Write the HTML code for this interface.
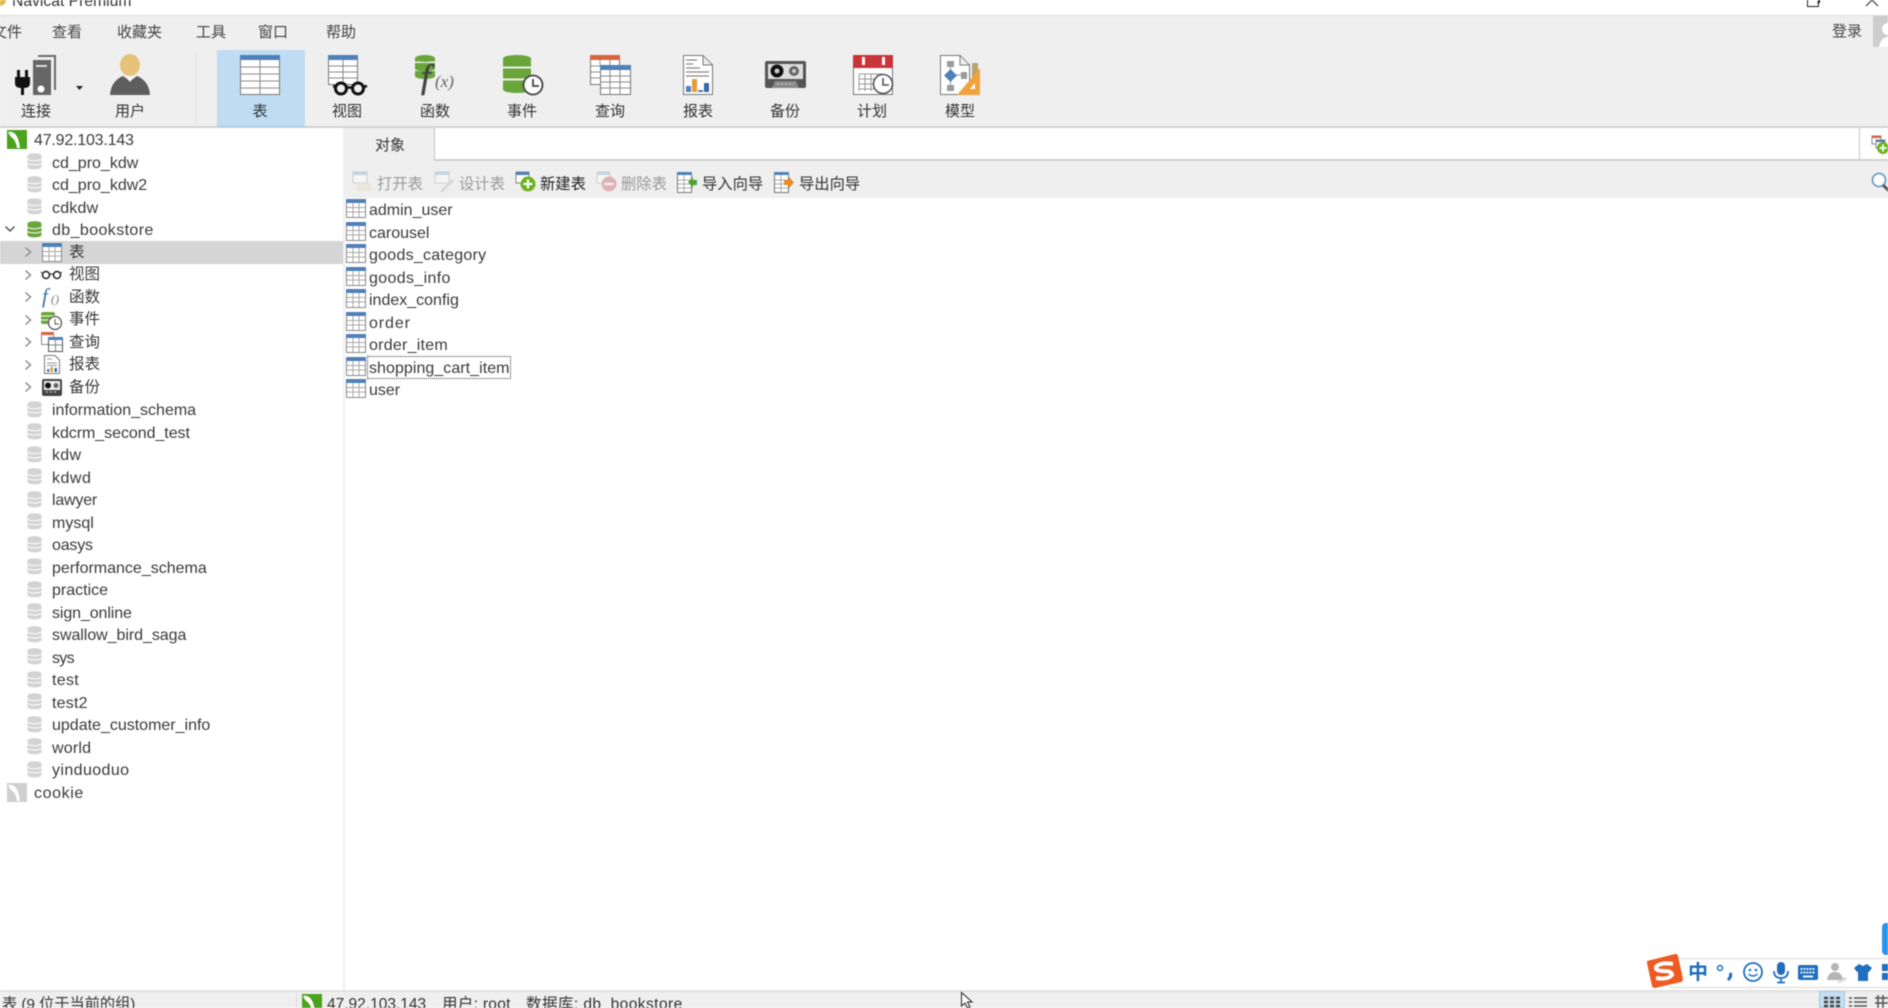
<!DOCTYPE html>
<html lang="zh"><head><meta charset="utf-8"><title>Navicat Premium</title>
<style>
html,body{margin:0;padding:0;width:1888px;height:1008px;overflow:hidden;background:#fff}
#r{position:relative;width:1888px;height:1008px;overflow:hidden;background:#fff;font-family:"Liberation Sans","Noto Sans CJK SC",sans-serif;color:#333;filter:blur(.4px)}
#r>*{position:absolute}
.t{white-space:nowrap;font-size:15.5px;line-height:22px;height:22px}
.m{top:22px;color:#444;font-size:15px}
.l{top:101px;width:70px;text-align:center;font-size:15px;color:#333}
.o{top:174px;font-size:15.3px;color:#333}
.g{color:#9a9a9a}
.s{position:absolute}
.row{font-size:16px;color:#3a3a3a}
.c{font-size:15.5px}
svg{overflow:visible}
</style></head><body>
<svg width="0" height="0" style="position:absolute">
<defs>
<symbol id="db" viewBox="0 0 15 17"><g fill="#d3d3d3"><ellipse cx="7.5" cy="2.6" rx="7" ry="2.4"/><rect x=".5" y="2.6" width="14" height="3.2"/><ellipse cx="7.5" cy="5.8" rx="7" ry="2.2"/><rect x=".5" y="7" width="14" height="3"/><ellipse cx="7.5" cy="10" rx="7" ry="2.2"/><rect x=".5" y="11" width="14" height="3"/><ellipse cx="7.5" cy="14" rx="7" ry="2.4"/></g><path d="M1 6.6Q7.5 9 14 6.600M1 10.900Q7.5 13.200 14 10.900" stroke="#fff" fill="none"/></symbol>
<symbol id="dbg" viewBox="0 0 15 17"><g fill="#6aa53a"><ellipse cx="7.5" cy="2.6" rx="7" ry="2.4"/><rect x=".5" y="2.6" width="14" height="3.2"/><ellipse cx="7.5" cy="5.8" rx="7" ry="2.2"/><rect x=".5" y="7" width="14" height="3"/><ellipse cx="7.5" cy="10" rx="7" ry="2.2"/><rect x=".5" y="11" width="14" height="3"/><ellipse cx="7.5" cy="14" rx="7" ry="2.4"/></g><path d="M1 6.6Q7.5 9 14 6.600M1 10.900Q7.5 13.200 14 10.900" stroke="#fff" fill="none"/></symbol>
<symbol id="tb" viewBox="0 0 20 19"><rect x=".5" y=".5" width="19" height="18" fill="#fff" stroke="#8a8a8a"/><rect width="20" height="4" fill="#4f81b8"/><path d="M1 8.500H19M1 13H19M7 4V18M13 4V18" stroke="#a9a9a9"/></symbol>
<symbol id="my" viewBox="0 0 20 19"><rect width="20" height="19" fill="#4aa31d"/><path d="M1 2Q6 1 9 5Q12 9 13 18H10Q9 11 5.500 8Q3 6.500 1 2Z" fill="#fff"/></symbol>
<symbol id="myg" viewBox="0 0 20 19"><rect width="20" height="19" fill="#cfcfcf"/><path d="M1 2Q6 1 9 5Q12 9 13 18H10Q9 11 5.500 8Q3 6.500 1 2Z" fill="#fff"/></symbol>
<symbol id="chev" viewBox="0 0 8 12"><path d="M1.500 1.500L6.500 6L1.500 10.500" fill="none" stroke="#8c8c8c" stroke-width="1.500"/></symbol>
</defs></svg>
<div id="r">
<!-- title bar -->
<div style="left:0;top:0;width:1888px;height:15px;background:#fff"></div>
<div style="left:-7px;top:-6px;width:13px;height:12px;border-radius:50%;background:#e8b93a"></div>
<div class="t" style="left:12px;top:-9px;font-size:15.7px;color:#333">Navicat Premium</div>
<div style="left:1807px;top:-6px;width:10px;height:11px;border:1px solid #222"></div>
<div style="left:1817px;top:-4px;width:2px;height:5px;border:1px solid #222;border-left:0"></div>
<svg style="left:1866px;top:0" width="14" height="6"><path d="M0 6L6 0L12 6" stroke="#222" fill="none"/></svg>
<div style="left:0;top:15px;width:1888px;height:113px;background:#efefef;border-top:1px solid #dcdcdc;border-bottom:2px solid #d2d2d2;box-sizing:border-box"></div>
<!-- menu -->
<div class="t m" style="left:-8px">文件</div>
<div class="t m" style="left:52px">查看</div>
<div class="t m" style="left:117px">收藏夹</div>
<div class="t m" style="left:196px">工具</div>
<div class="t m" style="left:258px">窗口</div>
<div class="t m" style="left:326px">帮助</div>
<div class="t" style="left:1832px;top:21px;font-size:15px;color:#444">登录</div>
<div style="left:1873px;top:16px;width:15px;height:31px;background:#cdcdcd"></div>
<svg style="left:1873px;top:16px" width="15" height="31"><circle cx="15" cy="13" r="6" fill="#fff"/><path d="M6 31Q8 21 15 21V31Z" fill="#fff"/></svg>
<!-- toolbar -->
<div style="left:217px;top:50px;width:88px;height:77px;background:#bfdcf2;border-bottom:1px solid #a3cdee;box-sizing:border-box"></div>
<div style="left:196px;top:52px;width:1px;height:72px;background:#dfdfdf"></div>

<svg style="left:15px;top:55px" width="41" height="40" viewBox="0 0 41 40"><path d="M23 0H41V35H39V2H23Z" fill="#6a6a6a"/><path d="M18 5H36V40H18Z" fill="#666"/><rect x="21" y="10" width="11" height="2" fill="#ddd"/><circle cx="26" cy="34" r="3.500" fill="#fff"/><path d="M2 15H5V22H10V15H13V22H15V28Q15 33 9 33V40H6V33Q0 33 0 28V22H2Z" fill="#111"/></svg>
<svg style="left:75px;top:85px" width="9" height="6"><path d="M1 1H8L4.500 5Z" fill="#222"/></svg>
<svg style="left:110px;top:55px" width="40" height="40" viewBox="0 0 40 40"><ellipse cx="20" cy="10" rx="10" ry="11" fill="#e6c27a"/><path d="M0 40Q1 26 13 21L20 26L27 21Q39 26 40 40Z" fill="#5e5e5e"/><path d="M15 21L20 27L25 21Z" fill="#f4f4f4"/></svg>
<svg style="left:240px;top:55px" width="40" height="40" viewBox="0 0 40 40"><rect x=".5" y=".5" width="39" height="39" fill="#fff" stroke="#777"/><rect width="40" height="5" fill="#4f81b8"/><path d="M0 12H40M0 19H40M0 26H40M0 33H40M20 5V40" stroke="#8a8a8a"/></svg>
<svg style="left:328px;top:55px" width="40" height="40" viewBox="0 0 40 40"><rect x=".5" y=".5" width="29" height="29" fill="#fff" stroke="#777"/><rect width="30" height="5" fill="#4f81b8"/><path d="M0 11H30M0 17H30M0 23H30M15 5V30" stroke="#8a8a8a"/><circle cx="13" cy="33.500" r="5.500" fill="#efefef" stroke="#111" stroke-width="3"/><circle cx="30" cy="33.500" r="5.500" fill="#efefef" stroke="#111" stroke-width="3"/><path d="M18 32.500H25M5 31L8 32M35 32L39 31" stroke="#111" stroke-width="2.500"/></svg>
<svg style="left:415px;top:55px" width="40" height="40" viewBox="0 0 40 40"><g fill="#6aa53a"><ellipse cx="10" cy="3.500" rx="10" ry="3.500"/><rect y="3.500" width="20" height="3"/><rect y="8" width="20" height="6"/><ellipse cx="10" cy="14" rx="10" ry="2"/><rect y="16" width="20" height="5"/><ellipse cx="10" cy="21" rx="10" ry="3"/></g><text x="6" y="33" font-family="Liberation Serif,serif" font-style="italic" font-size="34" stroke="#444" stroke-width=".5" fill="#444">f</text><text x="20" y="32" font-family="Liberation Serif,serif" font-style="italic" font-size="17" fill="#666">(x)</text></svg>
<svg style="left:503px;top:55px" width="40" height="40" viewBox="0 0 40 40"><g fill="#6aa53a"><ellipse cx="14" cy="3.500" rx="14" ry="3.500"/><rect y="3.500" width="28" height="8"/><rect y="13.500" width="28" height="10"/><rect y="25.500" width="28" height="9"/><ellipse cx="14" cy="34.500" rx="14" ry="3.500"/></g><circle cx="30" cy="30" r="9.500" fill="#fff" stroke="#444" stroke-width="1.800"/><path d="M30 24V31H36" stroke="#444" stroke-width="1.800" fill="none"/></svg>
<svg style="left:590px;top:55px" width="41" height="40" viewBox="0 0 41 40"><rect x=".5" y=".5" width="29" height="29" fill="#fff" stroke="#777"/><rect width="30" height="5" fill="#d8633c"/><path d="M0 11H11M0 17H11M0 23H11M10 5V10M20 5V10" stroke="#8a8a8a"/><rect x="10.500" y="10.500" width="30" height="29" fill="#fff" stroke="#777"/><rect x="10" y="10" width="31" height="5" fill="#4f81b8"/><path d="M11 21H40M11 27H40M11 33H40M20 15V39M30 15V39" stroke="#8a8a8a"/></svg>
<svg style="left:683px;top:55px" width="30" height="40" viewBox="0 0 30 40"><path d="M.5.500H20L29.500 10V39.500H.5Z" fill="#fff" stroke="#777"/><path d="M20 1V10H29" fill="#eee" stroke="#777"/><path d="M3 5H14M3 9H10M3 13H17M3 17H26M3 21H26" stroke="#888" stroke-width="1.300"/><rect x="3" y="31" width="5" height="6" fill="#4f81b8"/><rect x="9" y="24" width="5" height="13" fill="#e89a3a"/><rect x="15" y="35" width="5" height="2" fill="#4f81b8"/><rect x="21" y="28" width="5" height="9" fill="#2f6ca8"/></svg>
<svg style="left:765px;top:61px" width="41" height="27" viewBox="0 0 41 27"><rect width="41" height="27" rx="2" fill="#555"/><rect x="3" y="3" width="35" height="15" fill="#ddd"/><circle cx="12" cy="10" r="6.500" fill="#111"/><circle cx="12" cy="10" r="2.500" fill="#ccc"/><circle cx="29" cy="10" r="5" fill="#666"/><circle cx="29" cy="10" r="2" fill="#ccc"/><path d="M7 27L10 20H31L34 27Z" fill="#888"/><path d="M12 23H29" stroke="#ddd" stroke-dasharray="2 2"/></svg>
<svg style="left:853px;top:55px" width="40" height="40" viewBox="0 0 40 40"><rect x=".5" y=".5" width="39" height="39" fill="#fff" stroke="#777"/><rect width="40" height="13" fill="#c9343a"/><rect x="9" y="2" width="3" height="8" fill="#fff"/><rect x="29" y="2" width="3" height="8" fill="#fff"/><path d="M6 19H30M6 24H30M6 29H30M6 34H30M6 19V36M12 19V36M18 19V36M24 19V36" stroke="#999"/><circle cx="30" cy="29" r="9.500" fill="#fff" stroke="#555" stroke-width="1.600"/><path d="M30 23V30H36" stroke="#555" stroke-width="1.600" fill="none"/></svg>
<svg style="left:940px;top:55px" width="41" height="40" viewBox="0 0 41 40"><path d="M.5.500H20L29.500 10V39.500H.5Z" fill="#fff" stroke="#777"/><path d="M20 1V10H29" fill="#eee" stroke="#777"/><rect x="7" y="6" width="7" height="6" fill="#9a9a9a"/><rect x="7" y="30" width="7" height="6" fill="#9a9a9a"/><rect x="21" y="17" width="6" height="7" fill="#9a9a9a"/><path d="M10.500 12V30M15 20H21" stroke="#999"/><path d="M4 20.500L10.500 14L17 20.500L10.500 27Z" fill="#4f81b8"/><rect x="32" y="8" width="6" height="20" fill="#b9a26f"/><path d="M17 40L40 13V40Z" fill="#f0a23c"/><path d="M30 34L35 28V34Z" fill="#fff"/></svg>

<div class="t l" style="left:1px">连接</div>
<div class="t l" style="left:95px">用户</div>
<div class="t l" style="left:225px">表</div>
<div class="t l" style="left:312px">视图</div>
<div class="t l" style="left:400px">函数</div>
<div class="t l" style="left:487px">事件</div>
<div class="t l" style="left:575px">查询</div>
<div class="t l" style="left:663px">报表</div>
<div class="t l" style="left:750px">备份</div>
<div class="t l" style="left:837px">计划</div>
<div class="t l" style="left:925px">模型</div>

<!-- right panel header -->
<div style="left:343px;top:128px;width:1545px;height:70px;background:#efefef"></div>
<div style="left:434px;top:128px;width:1454px;height:33px;background:#fff;border-left:1px solid #c6c6c6;border-bottom:2px solid #d0d0d0;box-sizing:border-box"></div>
<div style="left:1859px;top:128px;width:1px;height:32px;background:#c6c6c6"></div>
<div class="t" style="left:375px;top:135px;font-size:15px;color:#333">对象</div>
<svg style="left:1871px;top:135px" width="18" height="20" viewBox="0 0 18 20"><rect x="1" y="1" width="9" height="8" fill="#fff" stroke="#888"/><rect x="1" y="1" width="9" height="2" fill="#d8633c"/><rect x="5" y="5" width="9" height="8" fill="#fff" stroke="#888"/><rect x="5" y="5" width="9" height="2" fill="#4f81b8"/><circle cx="12" cy="13" r="6" fill="#6cb21f"/><path d="M12 9.500V16.500M8.500 13H15.500" stroke="#fff" stroke-width="1.800"/></svg>
<svg style="left:1871px;top:171px" width="18" height="22" viewBox="0 0 18 22"><circle cx="8" cy="9" r="6.500" fill="#fff" stroke="#6f9fc8" stroke-width="1.800"/><path d="M12 14L18 20" stroke="#555" stroke-width="3"/></svg>

<!-- object toolbar -->
<svg style="left:352px;top:171px" width="21" height="21" viewBox="0 0 21 21" opacity=".45"><rect x="1" y="1" width="14" height="11" fill="#fff" stroke="#aaa"/><rect x="1" y="1" width="14" height="3" fill="#8fb0d0"/><path d="M5 20V12H19L20 20Z" fill="#e6dcc4"/></svg>
<div class="t o g" style="left:377px">打开表</div>
<svg style="left:434px;top:171px" width="21" height="21" viewBox="0 0 21 21" opacity=".45"><rect x="1" y="1" width="14" height="11" fill="#fff" stroke="#aaa"/><rect x="1" y="1" width="14" height="3" fill="#8fb0d0"/><path d="M7 19L18 8L20 10L9 21L6 21Z" fill="#bbb"/></svg>
<div class="t o g" style="left:459px">设计表</div>
<svg style="left:515px;top:171px" width="21" height="21" viewBox="0 0 21 21"><rect x="1" y="1" width="13" height="11" fill="#fff" stroke="#888"/><rect x="1" y="1" width="13" height="3" fill="#4f81b8"/><circle cx="13" cy="13" r="7.500" fill="#6cb21f"/><path d="M13 8.500V17.500M8.500 13H17.500" stroke="#fff" stroke-width="2.200"/></svg>
<div class="t o" style="left:540px;color:#222">新建表</div>
<svg style="left:596px;top:171px" width="21" height="21" viewBox="0 0 21 21" opacity=".45"><rect x="1" y="1" width="13" height="11" fill="#fff" stroke="#aaa"/><rect x="1" y="1" width="13" height="3" fill="#8fb0d0"/><circle cx="13" cy="13" r="7.500" fill="#d06a6a"/><path d="M8.500 13H17.500" stroke="#fff" stroke-width="2.200"/></svg>
<div class="t o g" style="left:621px">删除表</div>
<svg style="left:677px;top:172px" width="21" height="21" viewBox="0 0 21 21"><rect x=".5" y=".5" width="14" height="20" fill="#fff" stroke="#777"/><rect width="15" height="3" fill="#4f81b8"/><path d="M1 8H14M1 12H14M1 16H14M7 3V20" stroke="#aaa"/><path d="M11 10L16 5V8H20V13H16V16Z" fill="#4fa32c"/></svg>
<div class="t o" style="left:702px">导入向导</div>
<svg style="left:774px;top:172px" width="21" height="21" viewBox="0 0 21 21"><rect x=".5" y=".5" width="14" height="20" fill="#fff" stroke="#777"/><rect width="15" height="3" fill="#4f81b8"/><path d="M1 8H14M1 12H14M1 16H14M7 3V20" stroke="#aaa"/><path d="M10 8H15V5L20 10.500L15 16V13H10Z" fill="#f08a1e"/></svg>
<div class="t o" style="left:799px">导出向导</div>

<!-- sidebar divider -->
<div style="left:343px;top:198px;width:2px;height:792px;background:#efefef"></div>

<!-- tree -->
<svg class="s" style="left:7px;top:130px" width="20" height="19"><use href="#my"/></svg><div class="t row" style="left:34px;top:130px;letter-spacing:-.2px">47.92.103.143</div>
<svg class="s" style="left:27px;top:153px" width="15" height="17"><use href="#db"/></svg><div class="t row" style="left:52px;top:153px">cd_pro_kdw</div>
<svg class="s" style="left:27px;top:176px" width="15" height="17"><use href="#db"/></svg><div class="t row" style="left:52px;top:175px">cd_pro_kdw2</div>
<svg class="s" style="left:27px;top:198px" width="15" height="17"><use href="#db"/></svg><div class="t row" style="left:52px;top:198px;letter-spacing:.2px">cdkdw</div>
<svg class="s" style="left:4px;top:225px" width="12" height="8"><path d="M1.500 1.500L6 6L10.500 1.500" fill="none" stroke="#555" stroke-width="1.500"/></svg>
<svg class="s" style="left:27px;top:221px" width="15" height="17"><use href="#dbg"/></svg><div class="t row" style="left:52px;top:220px;letter-spacing:.4px">db_bookstore</div>
<div style="left:0;top:241px;width:343px;height:23px;background:#d5d5d5"></div>

<svg class="s" style="left:24px;top:246px" width="8" height="12"><use href="#chev"/></svg>
<svg class="s" style="left:42px;top:243px" width="20" height="19"><use href="#tb"/></svg><div class="t row c" style="left:69px;top:242px">表</div>
<svg class="s" style="left:24px;top:269px" width="8" height="12"><use href="#chev"/></svg>
<svg class="s" style="left:41px;top:268px" width="21" height="12" viewBox="0 0 21 12"><circle cx="5" cy="7" r="3.500" fill="#fff" stroke="#222" stroke-width="1.500"/><circle cx="16" cy="7" r="3.500" fill="#fff" stroke="#222" stroke-width="1.500"/><path d="M8.500 6H12.500M1 5L0 4M20 5L21 4" stroke="#222"/></svg>
<div class="t row c" style="left:69px;top:264px">视图</div>
<svg class="s" style="left:24px;top:291px" width="8" height="12"><use href="#chev"/></svg>
<svg class="s" style="left:41px;top:285px" width="22" height="23"><text x="1" y="18" font-family="Liberation Serif,serif" font-style="italic" font-size="21" fill="#3b6ea5">f</text><text x="10" y="18" font-family="Liberation Serif,serif" font-style="italic" font-size="12" fill="#777">()</text></svg>
<div class="t row c" style="left:69px;top:287px">函数</div>
<svg class="s" style="left:24px;top:314px" width="8" height="12"><use href="#chev"/></svg>
<svg class="s" style="left:41px;top:311px" width="22" height="19" viewBox="0 0 22 19"><rect x="0" y="1" width="14" height="12" rx="2" fill="#6aa53a"/><path d="M0 5H14M0 9H14" stroke="#fff"/><circle cx="14" cy="12" r="6.500" fill="#fff" stroke="#555" stroke-width="1.300"/><path d="M14 8V13H18" stroke="#555" fill="none"/></svg>
<div class="t row c" style="left:69px;top:309px">事件</div>
<svg class="s" style="left:24px;top:336px" width="8" height="12"><use href="#chev"/></svg>
<svg class="s" style="left:41px;top:332px" width="22" height="20" viewBox="0 0 22 20"><rect x=".5" y=".5" width="12" height="12" fill="#fff" stroke="#888"/><rect width="13" height="3" fill="#d8633c"/><rect x="7.500" y="5.500" width="14" height="14" fill="#fff" stroke="#555"/><rect x="7" y="5" width="15" height="3" fill="#4f81b8"/><path d="M8 13H21M14.500 8V19" stroke="#888"/></svg>
<div class="t row c" style="left:69px;top:332px">查询</div>
<svg class="s" style="left:24px;top:359px" width="8" height="12"><use href="#chev"/></svg>
<svg class="s" style="left:44px;top:355px" width="16" height="19" viewBox="0 0 16 19"><path d="M.5.500H11L15.500 5V18.500H.5Z" fill="#fff" stroke="#777"/><path d="M3 4H8M3 8H13M3 10.500H13" stroke="#999"/><rect x="3" y="14" width="2.500" height="3" fill="#4f81b8"/><rect x="6.500" y="12" width="2.500" height="5" fill="#e89a3a"/><rect x="10.500" y="13" width="2.500" height="4" fill="#2f6ca8"/></svg>
<div class="t row c" style="left:69px;top:354px">报表</div>
<svg class="s" style="left:24px;top:381px" width="8" height="12"><use href="#chev"/></svg>
<svg class="s" style="left:42px;top:379px" width="20" height="17" viewBox="0 0 20 17"><rect width="20" height="17" rx="2" fill="#444"/><rect x="2" y="2" width="16" height="9" fill="#eee"/><circle cx="6" cy="6.500" r="3" fill="#111"/><circle cx="14" cy="6.500" r="2.500" fill="#666"/><path d="M4 13H16" stroke="#ddd" stroke-dasharray="2 2"/></svg>
<div class="t row c" style="left:69px;top:377px">备份</div>

<svg class="s" style="left:27px;top:401px" width="15" height="17"><use href="#db"/></svg><div class="t row" style="left:52px;top:400px">information_schema</div>
<svg class="s" style="left:27px;top:423px" width="15" height="17"><use href="#db"/></svg><div class="t row" style="left:52px;top:423px;letter-spacing:-.05px">kdcrm_second_test</div>
<svg class="s" style="left:27px;top:446px" width="15" height="17"><use href="#db"/></svg><div class="t row" style="left:52px;top:445px;letter-spacing:.3px">kdw</div>
<svg class="s" style="left:27px;top:468px" width="15" height="17"><use href="#db"/></svg><div class="t row" style="left:52px;top:468px;letter-spacing:.5px">kdwd</div>
<svg class="s" style="left:27px;top:491px" width="15" height="17"><use href="#db"/></svg><div class="t row" style="left:52px;top:490px;letter-spacing:-.2px">lawyer</div>
<svg class="s" style="left:27px;top:513px" width="15" height="17"><use href="#db"/></svg><div class="t row" style="left:52px;top:513px">mysql</div>
<svg class="s" style="left:27px;top:536px" width="15" height="17"><use href="#db"/></svg><div class="t row" style="left:52px;top:535px;letter-spacing:-.2px">oasys</div>
<svg class="s" style="left:27px;top:558px" width="15" height="17"><use href="#db"/></svg><div class="t row" style="left:52px;top:558px">performance_schema</div>
<svg class="s" style="left:27px;top:581px" width="15" height="17"><use href="#db"/></svg><div class="t row" style="left:52px;top:580px">practice</div>
<svg class="s" style="left:27px;top:603px" width="15" height="17"><use href="#db"/></svg><div class="t row" style="left:52px;top:603px;letter-spacing:-.1px">sign_online</div>
<svg class="s" style="left:27px;top:626px" width="15" height="17"><use href="#db"/></svg><div class="t row" style="left:52px;top:625px;letter-spacing:-.05px">swallow_bird_saga</div>
<svg class="s" style="left:27px;top:648px" width="15" height="17"><use href="#db"/></svg><div class="t row" style="left:52px;top:648px;letter-spacing:-.7px">sys</div>
<svg class="s" style="left:27px;top:671px" width="15" height="17"><use href="#db"/></svg><div class="t row" style="left:52px;top:670px;letter-spacing:.3px">test</div>
<svg class="s" style="left:27px;top:693px" width="15" height="17"><use href="#db"/></svg><div class="t row" style="left:52px;top:693px;letter-spacing:.2px">test2</div>
<svg class="s" style="left:27px;top:716px" width="15" height="17"><use href="#db"/></svg><div class="t row" style="left:52px;top:715px">update_customer_info</div>
<svg class="s" style="left:27px;top:738px" width="15" height="17"><use href="#db"/></svg><div class="t row" style="left:52px;top:738px;letter-spacing:.2px">world</div>
<svg class="s" style="left:27px;top:761px" width="15" height="17"><use href="#db"/></svg><div class="t row" style="left:52px;top:760px;letter-spacing:.4px">yinduoduo</div>
<svg class="s" style="left:7px;top:783px" width="20" height="19"><use href="#myg"/></svg><div class="t row" style="left:34px;top:783px;letter-spacing:.6px">cookie</div>

<!-- list -->
<svg class="s" style="left:346px;top:199px" width="20" height="19"><use href="#tb"/></svg><div class="t row" style="left:369px;top:200px">admin_user</div>
<svg class="s" style="left:346px;top:222px" width="20" height="19"><use href="#tb"/></svg><div class="t row" style="left:369px;top:223px">carousel</div>
<svg class="s" style="left:346px;top:244px" width="20" height="19"><use href="#tb"/></svg><div class="t row" style="left:369px;top:245px;letter-spacing:.25px">goods_category</div>
<svg class="s" style="left:346px;top:267px" width="20" height="19"><use href="#tb"/></svg><div class="t row" style="left:369px;top:268px;letter-spacing:.35px">goods_info</div>
<svg class="s" style="left:346px;top:289px" width="20" height="19"><use href="#tb"/></svg><div class="t row" style="left:369px;top:290px">index_config</div>
<svg class="s" style="left:346px;top:312px" width="20" height="19"><use href="#tb"/></svg><div class="t row" style="left:369px;top:313px;letter-spacing:.9px">order</div>
<svg class="s" style="left:346px;top:334px" width="20" height="19"><use href="#tb"/></svg><div class="t row" style="left:369px;top:335px;letter-spacing:.25px">order_item</div>
<svg class="s" style="left:346px;top:357px" width="20" height="19"><use href="#tb"/></svg><div class="t row" style="left:369px;top:358px;letter-spacing:.05px">shopping_cart_item</div>
<div style="left:367px;top:356px;width:144px;height:23px;border:1px dotted #333;box-sizing:border-box"></div>
<svg class="s" style="left:346px;top:379px" width="20" height="19"><use href="#tb"/></svg><div class="t row" style="left:369px;top:380px">user</div>

<!-- status bar -->
<div style="left:0;top:990px;width:1888px;height:18px;background:#efefef;border-top:2px solid #e2e2e2;box-sizing:border-box"></div>
<div style="left:296px;top:992px;width:1px;height:16px;background:#ddd"></div>
<div class="t" style="left:2px;top:994px;font-size:15.2px;color:#333">表 (9 位于当前的组)</div>
<svg class="s" style="left:302px;top:994px" width="20" height="19"><use href="#my"/></svg>
<div class="t" style="left:327px;top:994px;font-size:15.5px;color:#333">47.92.103.143</div>
<div class="t" style="left:442px;top:994px;font-size:15.5px;color:#333;letter-spacing:.3px">用户: root</div>
<div class="t" style="left:526px;top:994px;font-size:15.5px;color:#333;letter-spacing:.45px">数据库: db_bookstore</div>
<svg class="s" style="left:961px;top:992px" width="13" height="16" viewBox="0 0 13 16"><path d="M.5.500V14L4 11L6.500 16L9 15L6.500 10H11Z" fill="#fff" stroke="#222"/></svg>
<div style="left:1819px;top:991px;width:26px;height:17px;background:#c6def2;border:1px solid #9cc6ea;box-sizing:border-box"></div>
<svg class="s" style="left:1824px;top:996px" width="16" height="12"><path d="M0 2H4M6 2H10M12 2H16M0 6H4M6 6H10M12 6H16M0 10H4M6 10H10M12 10H16" stroke="#444" stroke-width="2.500"/></svg>
<svg class="s" style="left:1849px;top:996px" width="18" height="12"><path d="M0 2H3M5 2H18M0 6H3M5 6H18M0 10H3M5 10H18" stroke="#555" stroke-width="1.500"/></svg>
<svg class="s" style="left:1875px;top:995px" width="13" height="13"><path d="M3 0V13M8 0V13M0 3H13M0 8H13" stroke="#555" stroke-width="1.500"/></svg>

<!-- IME -->
<div style="left:1882px;top:923px;width:8px;height:32px;background:#2a93ea;border-radius:4px 0 0 4px"></div>
<div style="left:1670px;top:958px;width:218px;height:30px;background:#fff;border-top:1px solid #d8d8d8;border-bottom:1px solid #d8d8d8;box-sizing:border-box"></div>
<svg class="s" style="left:1646px;top:953px" width="38" height="36" viewBox="0 0 38 36"><path d="M1 8L29 1Q31 .5 32 3L37 26Q37 28 35 29L9 35Q7 35 6 33L1 10Z" fill="#ee5a22"/><path d="M27 11Q14 9 10 14Q9 18 18 18Q26 18 26 22Q22 27 10 25" fill="none" stroke="#fff" stroke-width="4"/></svg>
<div class="t" style="left:1688px;top:960px;font-size:20px;line-height:26px;height:26px;font-weight:700;color:#1f6fbd">中</div>
<svg class="s" style="left:1716px;top:964px" width="18" height="18"><circle cx="4" cy="4" r="2.500" fill="none" stroke="#1f6fbd" stroke-width="1.500"/><path d="M14 9Q16 12 12 16" stroke="#1f6fbd" stroke-width="3" fill="none"/></svg>
<svg class="s" style="left:1743px;top:962px" width="20" height="20"><circle cx="10" cy="10" r="9" fill="#fff" stroke="#1f6fbd" stroke-width="1.800"/><circle cx="7" cy="8" r="1.300" fill="#1f6fbd"/><circle cx="13" cy="8" r="1.300" fill="#1f6fbd"/><path d="M5.500 12Q10 16 14.500 12" fill="none" stroke="#1f6fbd" stroke-width="1.500"/></svg>
<svg class="s" style="left:1773px;top:962px" width="16" height="21"><rect x="4" y="0" width="8" height="13" rx="4" fill="#1f6fbd"/><path d="M1 9Q1 16 8 16Q15 16 15 9M8 16V20M4 20.500H12" fill="none" stroke="#1f6fbd" stroke-width="1.800"/></svg>
<svg class="s" style="left:1798px;top:965px" width="20" height="15"><rect width="20" height="15" rx="2" fill="#1f6fbd"/><path d="M2.500 4H17.500M2.500 7.500H17.500" stroke="#fff" stroke-width="1.800" stroke-dasharray="2 1"/><path d="M5 11.500H15" stroke="#fff" stroke-width="1.800"/></svg>
<svg class="s" style="left:1827px;top:962px" width="20" height="21"><circle cx="8" cy="5" r="4" fill="#b5b5b5"/><path d="M0 18Q1 10 8 10Q15 10 16 18Z" fill="#b5b5b5"/><path d="M10 20L18 15L20 17L13 21Z" fill="#d8d8d8"/></svg>
<svg class="s" style="left:1854px;top:964px" width="18" height="17"><path d="M5 0L9 2L13 0L18 4L15 8H14V17H4V8H3L0 4Z" fill="#1f6fbd"/></svg>
<svg class="s" style="left:1882px;top:964px" width="8" height="17"><rect width="8" height="7" fill="#1f6fbd"/><rect y="9" width="8" height="7" fill="#1f6fbd"/></svg>
</div>
</body></html>
